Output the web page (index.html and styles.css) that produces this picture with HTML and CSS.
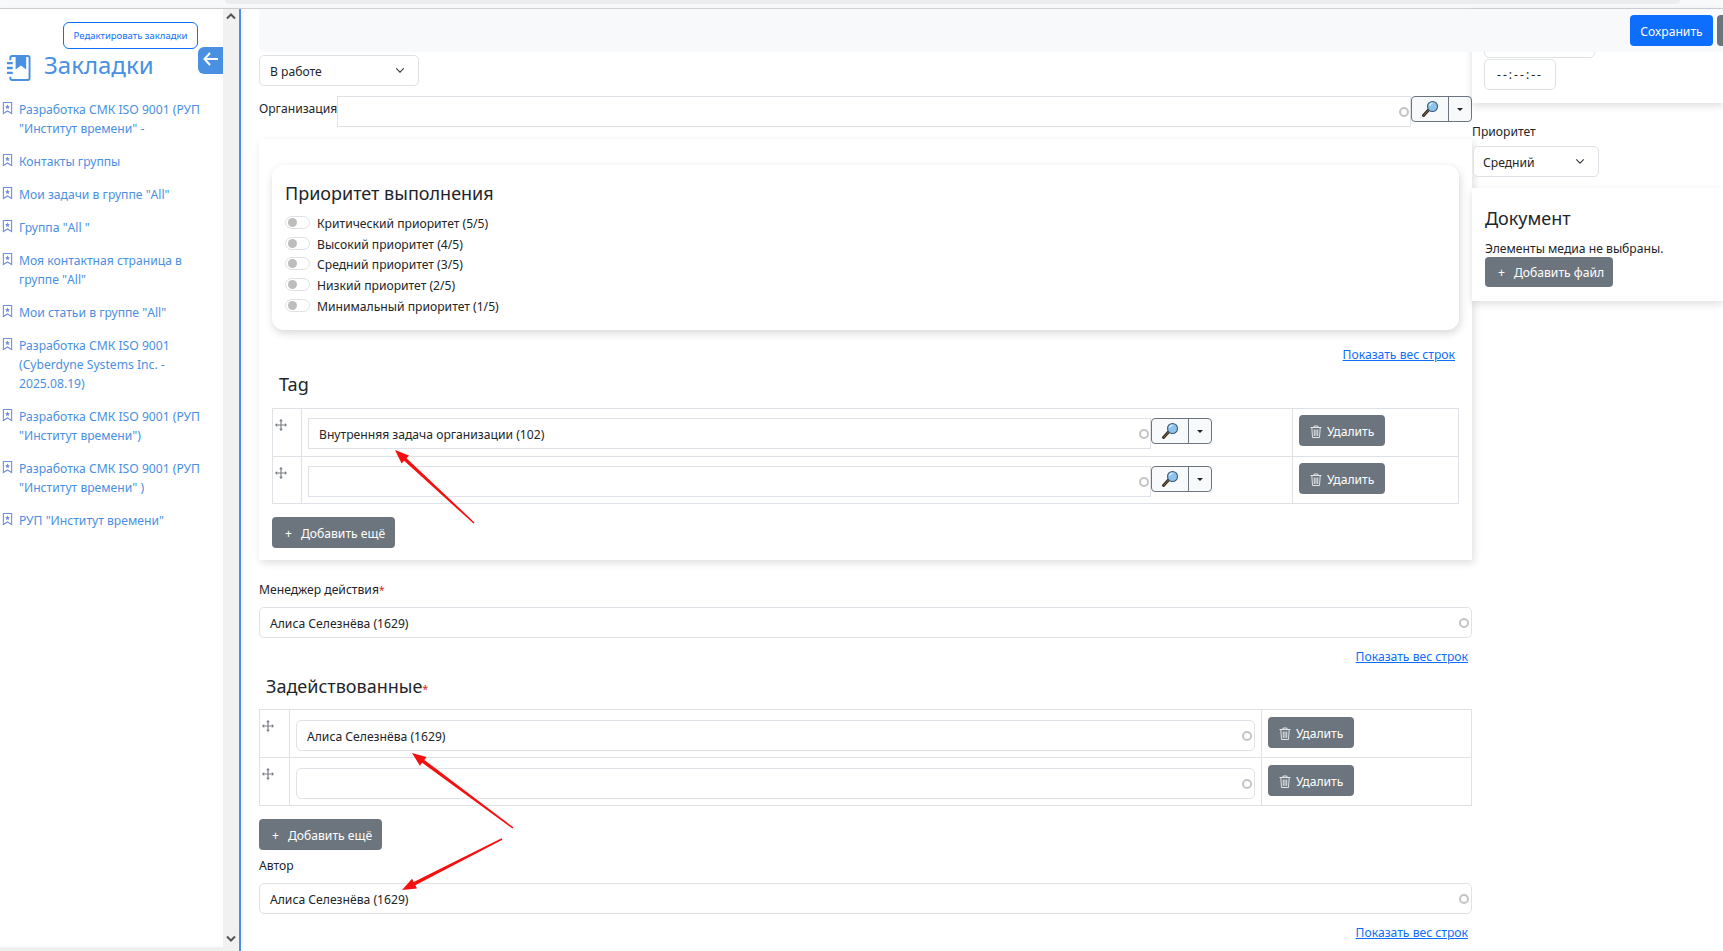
FILE: index.html
```html
<!DOCTYPE html>
<html lang="ru">
<head>
    <meta charset="UTF-8">
    <title>Задача</title>
    <link rel="stylesheet" href="styles.css">
</head>
<body>

<svg class="sprite" width="0" height="0">
    <symbol id="ic-mark" viewBox="0 0 12 14">
        <path d="M1.500 1h9v12L6 10.200 1.500 13z" fill="none" stroke="currentColor" stroke-width="1.200"/>
        <path d="M6 3.200l.8 1.700 1.800.2-1.300 1.200.4 1.800L6 7.200l-1.700.9.4-1.800-1.300-1.200 1.800-.2z" fill="currentColor"/>
    </symbol>
    <symbol id="ic-move" viewBox="0 0 14 14">
        <path d="M7 1v12M1 7h12" stroke="currentColor" stroke-width="1.400" fill="none"/>
        <path d="M7 0l2.200 2.500H4.800zM7 14l2.200-2.500H4.800zM0 7l2.500-2.200v4.400zM14 7l-2.500-2.200v4.400z" fill="currentColor"/>
    </symbol>
    <symbol id="ic-lens" viewBox="0 0 18 18">
        <path d="M2.500 15.500l5-5.500" stroke="#2a2a2a" stroke-width="3" stroke-linecap="round"/>
        <path d="M2.800 15.200l4.500-4.900" stroke="#9a7a4a" stroke-width="1" stroke-linecap="round"/>
        <circle cx="11.500" cy="6.500" r="5" fill="#8cc4ee" stroke="#3d5a76" stroke-width="1.100"/>
        <path d="M8.500 5.500a3.200 3.200 0 0 1 3-2.200" stroke="#e6f4ff" stroke-width="1.300" fill="none"/>
    </symbol>
    <symbol id="ic-trash" viewBox="0 0 12 13">
        <path d="M.5 2.500h11M4 2.500V1h4v1.500M1.800 2.500l.7 10h7l.7-10M4.300 4.500v6.500M6 4.500v6.500M7.700 4.500v6.500" fill="none" stroke="currentColor" stroke-width="1"/>
    </symbol>
    <symbol id="ic-chev" viewBox="0 0 12 8">
        <path d="M1.500 1.500L6 6l4.500-4.500" fill="none" stroke="#343a40" stroke-width="1.300"/>
    </symbol>
</svg>

<div class="browser-strip"><div class="browser-tab"></div></div>

<div class="page">

    <aside class="sidebar">
        <div class="sidebar-inner">
            <div class="sidebar-top">
                <button class="edit-btn">Редактировать закладки</button>
            </div>
            <div class="sidebar-head">
                <svg class="book-icon" viewBox="0 0 26 28">
                    <path d="M4.500 6V3.500a2 2 0 0 1 2-2h16a2 2 0 0 1 2 2v21a2 2 0 0 1-2 2h-16a2 2 0 0 1-2-2V23" fill="none" stroke="#4a90e2" stroke-width="2"/>
                    <path d="M10 1.500h11v14l-5.500-4-5.500 4z" fill="#4a90e2"/>
                    <path d="M1 9h6M1 14h6M1 19h6" stroke="#4a90e2" stroke-width="2.400"/>
                </svg>
                <span class="sidebar-title">Закладки</span>
                <button class="back-btn">
                    <svg width="16" height="14" viewBox="0 0 16 14"><path d="M7 1L1.500 7 7 13M2 7h13" fill="none" stroke="#fff" stroke-width="2"/></svg>
                </button>
            </div>
            <ul class="marks">
                <li><svg class="mark"><use href="#ic-mark"/></svg>Разработка СМК ISO 9001 (РУП "Институт времени" -</li>
                <li><svg class="mark"><use href="#ic-mark"/></svg>Контакты группы</li>
                <li><svg class="mark"><use href="#ic-mark"/></svg>Мои задачи в группе "All"</li>
                <li><svg class="mark"><use href="#ic-mark"/></svg>Группа "All "</li>
                <li><svg class="mark"><use href="#ic-mark"/></svg>Моя контактная страница в группе "All"</li>
                <li><svg class="mark"><use href="#ic-mark"/></svg>Мои статьи в группе "All"</li>
                <li><svg class="mark"><use href="#ic-mark"/></svg>Разработка СМК ISO 9001 (Cyberdyne Systems Inc. - 2025.08.19)</li>
                <li><svg class="mark"><use href="#ic-mark"/></svg>Разработка СМК ISO 9001 (РУП "Институт времени")</li>
                <li><svg class="mark"><use href="#ic-mark"/></svg>Разработка СМК ISO 9001 (РУП "Институт времени" )</li>
                <li><svg class="mark"><use href="#ic-mark"/></svg>РУП "Институт времени"</li>
            </ul>
        </div>
        <div class="scrollbar">
            <svg width="10" height="7" viewBox="0 0 10 7"><path d="M1 5.500l4-4 4 4" fill="none" stroke="#555" stroke-width="2"/></svg>
            <svg width="10" height="7" viewBox="0 0 10 7"><path d="M1 1.500l4 4 4-4" fill="none" stroke="#555" stroke-width="2"/></svg>
        </div>
    </aside>

    <div class="content">

        <div class="action-bar">
            <button class="btn btn-primary">Сохранить</button>
            <button class="btn btn-second"></button>
        </div>

        <main class="main-col">
            <div class="select status-select">В работе <svg class="chev"><use href="#ic-chev"/></svg></div>

            <div class="org-row">
                <label class="org-label">Организация</label>
                <div class="square-input"><span class="dot"></span></div>
                <div class="lookup">
                    <span class="lookup-lens"><svg width="18" height="18"><use href="#ic-lens"/></svg></span>
                    <span class="lookup-caret"><i></i></span>
                </div>
            </div>

            <section class="card">
                <div class="inner-card">
                    <h3 class="inner-title">Приоритет выполнения</h3>
                    <div class="switch-row"><span class="switch"></span>Критический приоритет (5/5)</div>
                    <div class="switch-row"><span class="switch"></span>Высокий приоритет (4/5)</div>
                    <div class="switch-row"><span class="switch"></span>Средний приоритет (3/5)</div>
                    <div class="switch-row"><span class="switch"></span>Низкий приоритет (2/5)</div>
                    <div class="switch-row"><span class="switch"></span>Минимальный приоритет (1/5)</div>
                </div>
                <div class="show-all show-tag"><a href="#">Показать вес строк</a></div>
                <h4 class="group-title tag-title">Tag</h4>

                <div class="rows tag-rows">
                    <div class="row">
                        <div class="cell-move"><svg class="move"><use href="#ic-move"/></svg></div>
                        <div class="cell-field">
                            <div class="square-input">Внутренняя задача организации (102)<span class="dot"></span></div>
                            <div class="lookup">
                                <span class="lookup-lens"><svg width="18" height="18"><use href="#ic-lens"/></svg></span>
                                <span class="lookup-caret"><i></i></span>
                            </div>
                        </div>
                        <div class="cell-del"><button class="btn btn-second btn-del"><svg class="trash"><use href="#ic-trash"/></svg>Удалить</button></div>
                    </div>
                    <div class="row">
                        <div class="cell-move"><svg class="move"><use href="#ic-move"/></svg></div>
                        <div class="cell-field">
                            <div class="square-input"><span class="dot"></span></div>
                            <div class="lookup">
                                <span class="lookup-lens"><svg width="18" height="18"><use href="#ic-lens"/></svg></span>
                                <span class="lookup-caret"><i></i></span>
                            </div>
                        </div>
                        <div class="cell-del"><button class="btn btn-second btn-del"><svg class="trash"><use href="#ic-trash"/></svg>Удалить</button></div>
                    </div>
                </div>
                <button class="btn btn-second btn-add"><span class="plus">+</span>Добавить ещё</button>
            </section>

            <label class="field-label manager-label">Менеджер действия<span class="req">*</span></label>
            <div class="round-input">Алиса Селезнёва (1629)<span class="dot"></span></div>
            <div class="show-all"><a href="#">Показать вес строк</a></div>

            <h4 class="group-title used-title">Задействованные<span class="req">*</span></h4>
            <div class="rows used-rows">
                <div class="row">
                    <div class="cell-move"><svg class="move"><use href="#ic-move"/></svg></div>
                    <div class="cell-field">
                        <div class="round-input">Алиса Селезнёва (1629)<span class="dot"></span></div>
                    </div>
                    <div class="cell-del"><button class="btn btn-second btn-del"><svg class="trash"><use href="#ic-trash"/></svg>Удалить</button></div>
                </div>
                <div class="row">
                    <div class="cell-move"><svg class="move"><use href="#ic-move"/></svg></div>
                    <div class="cell-field">
                        <div class="round-input"><span class="dot"></span></div>
                    </div>
                    <div class="cell-del"><button class="btn btn-second btn-del"><svg class="trash"><use href="#ic-trash"/></svg>Удалить</button></div>
                </div>
            </div>
            <button class="btn btn-second btn-add"><span class="plus">+</span>Добавить ещё</button>

            <label class="field-label author-label">Автор</label>
            <div class="round-input">Алиса Селезнёва (1629)<span class="dot"></span></div>
            <div class="show-all"><a href="#">Показать вес строк</a></div>
        </main>

        <div class="right-col">
            <section class="side-card time-card">
                <div class="date-input"></div>
                <div class="time-input">--:--:--</div>
            </section>
            <label class="field-label prio-label">Приоритет</label>
            <div class="select prio-select">Средний <svg class="chev"><use href="#ic-chev"/></svg></div>
            <section class="side-card doc-card">
                <h4 class="doc-title">Документ</h4>
                <p class="doc-text">Элементы медиа не выбраны.</p>
                <button class="btn btn-second btn-file"><span class="plus">+</span>Добавить файл</button>
            </section>
        </div>

        <!-- красные стрелки поверх формы -->
        <svg class="arrows" viewBox="241 9 1482 942">
            <path d="M474.500 522.400L406.500 458.200 409 455.500 395 450 401.600 463.500 404.100 460.800 473.500 523.600z"/>
            <path d="M513.500 827.400L424.300 759.900 426.500 756.900 412 753 419.900 765.700 422.100 762.700 512.500 828.600z"/>
            <path d="M502.400 839.700L415.300 885.200 417 888.500 402 890 412 878.700 413.700 882 501.600 838.300z"/>
        </svg>
    </div>
</div>

</body>
</html>
```

FILE: styles.css
```css
:root {
    --blue: #4a90e2;
    --primary: #0d6efd;
    --gray: #6c757d;
    --line: #dee2e6;
    --text: #212529;
}

* {
    box-sizing: border-box;
}

html, body {
    height: 100%;
    overflow: hidden;
}

body {
    margin: 0;
    font-family: "Noto Sans", "Open Sans", sans-serif;
    font-size: 12.150px;
    color: var(--text);
    background-color: #fff;
    display: flex;
    flex-direction: column;
}

.sprite {
    position: absolute;
}

.browser-strip {
    height: 9px;
    flex: none;
    background-color: #f8f9fa;
    border-bottom: 1px solid #cfd1d4;
    display: flex;
    justify-content: flex-end;
}

.browser-tab {
    width: 1455px;
    margin-right: 43px;
    height: 4px;
    background-color: #ecedef;
    border-radius: 0 0 6px 6px;
}

.page {
    flex: 1;
    min-height: 0;
    display: flex;
}

/* Sidebar */
.sidebar {
    width: 241px;
    flex: none;
    display: flex;
    border-right: 2px solid var(--blue);
    box-shadow: 2px 0 5px rgba(0, 0, 0, 0.06);
}

.sidebar-inner {
    width: 223px;
    flex: none;
    border-bottom: 4px solid #efefef;
}

.sidebar-top {
    display: flex;
    justify-content: flex-end;
    padding: 13px 25px 0 0;
}

.edit-btn {
    width: 135px;
    height: 27px;
    padding: 0;
    background-color: #fff;
    border: 1px solid var(--primary);
    border-radius: 6px;
    color: var(--primary);
    font-family: inherit;
    font-size: 9.500px;
}

.sidebar-head {
    display: flex;
    align-items: flex-start;
    height: 51px;
    padding-left: 6px;
}

.book-icon {
    width: 25px;
    height: 28px;
    margin-top: 5px;
}

.sidebar-title {
    margin-left: 13px;
    margin-top: -1px;
    font-size: 24px;
    color: var(--blue);
}

.back-btn {
    width: 25px;
    height: 27px;
    margin-left: auto;
    margin-top: -2px;
    padding: 0;
    background-color: var(--blue);
    border: none;
    border-radius: 6px 0 0 6px;
}

.marks {
    list-style: none;
    margin: 0;
    padding: 0 20px 0 19px;
    color: var(--blue);
    line-height: 19px;
}

.marks li {
    position: relative;
    margin-bottom: 14px;
}

.mark {
    position: absolute;
    left: -17px;
    top: 1px;
    width: 11px;
    height: 14px;
    color: #6f8fd8;
}

.scrollbar {
    width: 16px;
    flex: none;
    background-color: #f1f1f1;
    display: flex;
    flex-direction: column;
    align-items: center;
    justify-content: space-between;
    padding: 4px 0 9px;
}

/* Content */
.content {
    position: relative;
    flex: 1;
    min-width: 0;
    display: flex;
    padding-left: 18px;
}

.action-bar {
    position: absolute;
    left: 18px;
    right: 0;
    top: 0;
    height: 43px;
    background-color: #f8f9fa;
    border-radius: 0 0 0 6px;
    display: flex;
    justify-content: flex-end;
    gap: 4px;
    padding: 6px 0 0;
    z-index: 2;
}

.main-col {
    width: 1213px;
    flex: none;
    padding-top: 46px;
}

.right-col {
    flex: 1;
    min-width: 0;
}

.btn {
    height: 31px;
    padding: 1px 10px 0;
    border: none;
    border-radius: 4px;
    color: #fff;
    font-family: inherit;
    font-size: 12.150px;
    white-space: nowrap;
}

.btn-primary {
    width: 83px;
    background-color: var(--primary);
}

.btn-second {
    background-color: var(--gray);
}

.action-bar .btn-second {
    width: 20px;
    border-radius: 4px 0 0 4px;
    margin-right: -14px;
}

.select {
    height: 31px;
    display: flex;
    align-items: center;
    justify-content: space-between;
    padding: 1px 13px 0 10px;
    border: 1px solid var(--line);
    border-radius: 5px;
    background-color: #fff;
}

.status-select {
    width: 160px;
}

.prio-select {
    width: 126px;
    margin-left: 1px;
    padding-left: 9px;
}

.chev {
    width: 10px;
    height: 7px;
    margin-top: -2px;
}

.org-row {
    display: flex;
    align-items: flex-start;
    margin-top: 10px;
    line-height: 27px;
}

.org-label {
    line-height: 25px;
}

.square-input {
    position: relative;
    flex: 1;
    height: 31px;
    line-height: 31px;
    padding-left: 10px;
    border: 1px solid var(--line);
    background-color: #fff;
}

.round-input {
    position: relative;
    height: 31px;
    line-height: 31px;
    padding-left: 10px;
    border: 1px solid var(--line);
    border-radius: 5px;
    background-color: #fff;
}

.dot {
    position: absolute;
    right: 2px;
    top: 10px;
    width: 10px;
    height: 10px;
    border: 2px solid #c4c4c4;
    border-radius: 50%;
}

.square-input .dot {
    right: 1px;
}

.lookup {
    flex: none;
    width: 61px;
    height: 26px;
    display: flex;
    border: 1px solid var(--gray);
    border-radius: 4px;
    background-color: #f8f9fa;
}

.lookup-lens {
    width: 37px;
    display: flex;
    align-items: center;
    justify-content: center;
    border-right: 1px solid var(--gray);
}

.lookup-caret {
    flex: 1;
    display: flex;
    align-items: center;
    justify-content: center;
}

.lookup-caret i {
    border-top: 3px solid #212529;
    border-left: 3px solid transparent;
    border-right: 3px solid transparent;
    border-bottom: 0;
}

.card {
    margin-top: 12px;
    height: 421px;
    padding: 26px 13px 0;
    background-color: #fff;
    box-shadow: 2px 3px 8px rgba(0, 0, 0, 0.13);
}

.inner-card {
    height: 165px;
    padding: 15px 13px 0;
    border-radius: 12px;
    box-shadow: 1px 3px 8px rgba(0, 0, 0, 0.16);
}

.inner-title {
    margin: 0 0 6px;
    font-size: 18px;
    font-weight: 400;
    line-height: 27px;
}

.switch-row {
    display: flex;
    align-items: center;
    height: 20.800px;
    white-space: nowrap;
}

.switch {
    position: relative;
    width: 25px;
    height: 13px;
    margin-right: 7px;
    border: 1px solid var(--line);
    border-radius: 7px;
    margin-top: -2px;
}

.switch:before {
    content: "";
    position: absolute;
    left: 2px;
    top: 1px;
    width: 9px;
    height: 9px;
    border-radius: 50%;
    background-color: #bdbdbd;
}

.show-all {
    margin-top: 9px;
    height: 18px;
    line-height: 20px;
    padding-right: 4px;
    text-align: right;
}

.show-all a {
    color: var(--primary);
}

.show-tag {
    margin-top: 15px;
}

.group-title {
    margin: 0;
    font-weight: 400;
    font-size: 18px;
    line-height: 27px;
}

.tag-title {
    margin: 8px 0 10px 7px;
}

.used-title {
    margin: 8px 0 9px 7px;
}

.rows {
    border: 1px solid var(--line);
}

.row {
    display: flex;
    height: 47px;
}

.used-rows .row + .row {
    height: 48px;
}

.row + .row {
    border-top: 1px solid var(--line);
}

.cell-move {
    width: 30px;
    flex: none;
    padding: 10px 0 0 2px;
    border-right: 1px solid var(--line);
}

.tag-rows .cell-move {
    width: 29px;
}

.move {
    width: 12px;
    height: 12px;
    color: #7b7f84;
    display: block;
}

.cell-field {
    flex: 1;
    min-width: 0;
    display: flex;
    align-items: flex-start;
    padding: 9px 6px 0;
    border-right: 1px solid var(--line);
}

.cell-field .round-input {
    flex: 1;
}

.used-rows .cell-field {
    padding-top: 10px;
}

.cell-del {
    flex: none;
    padding: 6px 6px 0;
}

.tag-rows .cell-del {
    width: 165px;
}

.tag-rows .cell-field {
    padding-right: 80px;
}

.used-rows .cell-del {
    width: 209px;
    padding-top: 7px;
}

.btn-del {
    width: 86px;
    display: flex;
    align-items: center;
    padding: 1px 0 0 11px;
}

.trash {
    width: 12px;
    height: 13px;
    margin-right: 5px;
    color: #e3e5e8;
}

.btn-add {
    width: 123px;
    margin-top: 13px;
    padding: 1px 10px 0 13px;
    display: block;
    text-align: left;
}

.plus {
    margin-right: 9px;
}

.field-label {
    display: block;
    line-height: 18px;
}

.manager-label {
    margin: 21px 0 8px;
}

.author-label {
    margin: 7px 0 8px;
}

.req {
    color: #e02020;
    font-size: 10px;
    line-height: 0;
}

.used-title .req {
    font-size: 11px;
}

/* Right column */
.side-card {
    background-color: #fff;
    box-shadow: 0 3px 8px rgba(0, 0, 0, 0.13);
}

.time-card {
    height: 94px;
    padding: 0 0 0 12px;
}

.date-input {
    width: 111px;
    height: 49px;
    border: 1px solid var(--line);
    border-radius: 5px;
}

.time-input {
    width: 72px;
    height: 31px;
    margin-top: 1px;
    line-height: 29px;
    text-align: center;
    letter-spacing: 2px;
    border: 1px solid var(--line);
    border-radius: 5px;
}

.prio-label {
    margin: 20px 0 5px 0;
}

.doc-card {
    margin-top: 11px;
    height: 113px;
    padding: 17px 0 0 13px;
}

.doc-title {
    margin: 0 0 8px;
    font-size: 18px;
    font-weight: 400;
    line-height: 27px;
}

.doc-text {
    margin: 0;
    line-height: 17px;
}

.btn-file {
    width: 128px;
    height: 30px;
    padding: 1px 0 0 13px;
    text-align: left;
    display: block;
}

.arrows {
    position: absolute;
    left: 0;
    top: 0;
    width: 1482px;
    height: 942px;
    pointer-events: none;
    z-index: 3;
    fill: #f51010;
}
```
